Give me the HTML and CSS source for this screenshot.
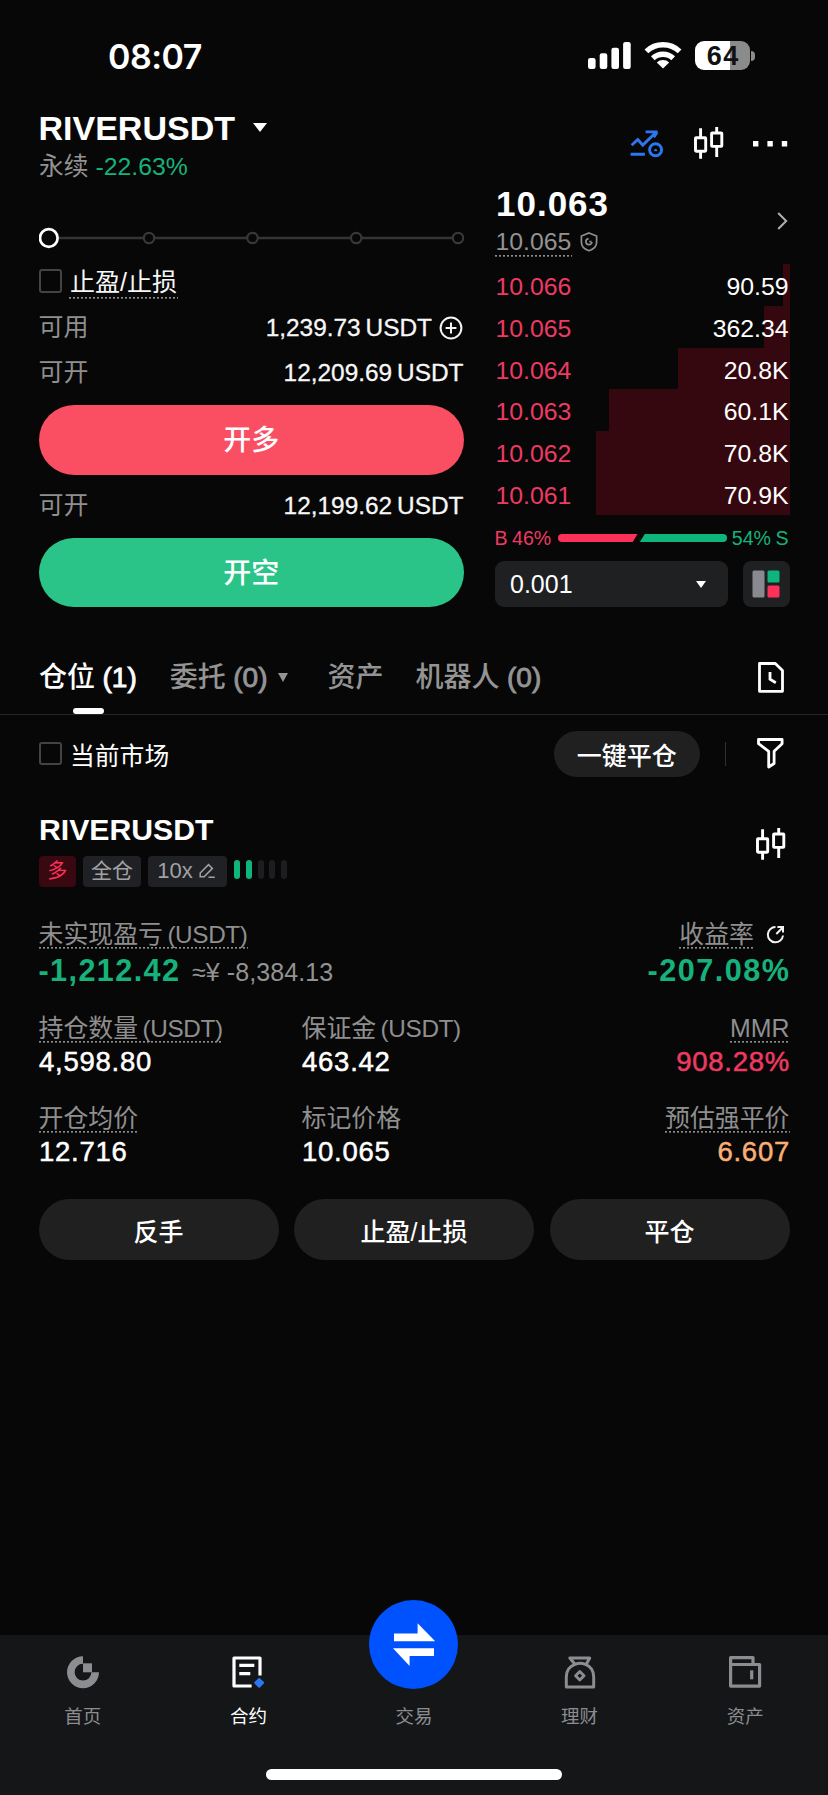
FILE: index.html
```html
<!DOCTYPE html>
<html lang="zh-CN">
<head>
<meta charset="utf-8">
<title>RIVERUSDT</title>
<link rel="stylesheet" href="styles.css">
</head>
<body>
<svg class="defs" width="0" height="0">
  <symbol id="candles" viewBox="0 0 30 32">
    <g fill="none" stroke="currentColor" stroke-width="2.9">
      <rect x="1.5" y="10.8" width="10.2" height="13.4" rx=".6"/>
      <rect x="17.6" y="6" width="10.2" height="13.4" rx=".6"/>
      <path d="M6.6 1.200v9M6.6 25v6.800M22.7 0v5M22.7 20v10"/>
    </g>
  </symbol>
</svg>
<div class="app">
  <header class="status">
    <span class="clock">08:07</span>
    <svg class="signal" width="43" height="27" viewBox="0 0 43 27" fill="#fff">
      <rect x="0" y="16" width="7.6" height="11" rx="2.2"/><rect x="11.7" y="11.3" width="7.6" height="15.7" rx="2.2"/><rect x="23.4" y="5.7" width="7.6" height="21.3" rx="2.2"/><rect x="35.1" y="0" width="7.6" height="27" rx="2.2"/>
    </svg>
    <svg class="wifi" width="38" height="28" viewBox="0 0 38 28">
      <g fill="none" stroke="#fff" stroke-width="5.400">
        <path d="M2.4 10.4a24 24 0 0 1 33.2 0"/>
        <path d="M8.8 17.2a15 15 0 0 1 20.4 0"/>
      </g>
      <path fill="#fff" d="M12.8 21.4a9.2 9.2 0 0 1 12.4 0L19 27.6z"/>
    </svg>
    <span class="battery"><b>64</b></span>
    <i class="nub"></i>
  </header>

  <section class="head">
    <div class="pair">
      <h1>RIVERUSDT<i class="caret"></i></h1>
      <p>永续 <span class="up">-22.63%</span></p>
    </div>
    <svg class="ic-trade" width="34" height="28" viewBox="0 0 34 28" fill="none" stroke="#2b77f0" stroke-width="2.9">
      <path d="M1.6 15.2l6.2-5.7 5 5.6L26 2.2M15.6 1.9h12M.6 24.2h14.3"/>
      <path d="M27 2.2l-3.2 5"/>
      <circle cx="25.6" cy="19.8" r="6"/>
      <path d="M24.200 20.700h2.800L25.6 18.900z" stroke-width="1" fill="#2b77f0"/>
    </svg>
    <svg class="ic-candle" width="30" height="32"><use href="#candles"/></svg>
    <svg class="ic-more" width="35" height="6" fill="#fff"><path d="M0 0h5.4v5.4H0zM14.4 0h5.4v5.4h-5.4zM28.8 0h5.4v5.4h-5.4z"/></svg>
  </section>

  <section class="trade">
    <div class="order">
      <svg class="slider" width="425" height="22" viewBox="0 0 425 22" fill="#070707">
        <path d="M20 11h393" stroke="#343437" stroke-width="2.6"/>
        <g stroke="#38383b" stroke-width="2.2"><circle cx="110" cy="11" r="5.2"/><circle cx="213.500" cy="11" r="5.2"/><circle cx="317.2" cy="11" r="5.2"/><circle cx="419" cy="11" r="5.2"/></g>
        <circle cx="9.800" cy="11" r="8.8" stroke="#fff" stroke-width="2.7"/>
      </svg>
      <div class="line tpsl"><i class="check"></i><span class="dots">止盈/止损</span></div>
      <div class="line avail"><label>可用</label><span>1,239.73 USDT</span>
        <svg width="24" height="24" viewBox="0 0 24 24" fill="none" stroke="#f4f4f4" stroke-width="2"><circle cx="12" cy="12" r="10.4"/><path d="M12 6.6v10.8M6.6 12h10.8"/></svg>
      </div>
      <div class="line open"><label>可开</label><span>12,209.69 USDT</span></div>
      <button class="big long">开多</button>
      <div class="line open2"><label>可开</label><span>12,199.62 USDT</span></div>
      <button class="big short">开空</button>
    </div>

    <div class="book">
      <div class="last">
        <div>
          <strong>10.063</strong>
          <div class="mark"><span class="dots">10.065</span>
            <svg width="18" height="20" viewBox="0 0 18 20" fill="none" stroke="#8f8f8f" stroke-width="1.7"><path d="M9 1l7.6 3v6.3c0 4-3 7-7.6 8.5-4.600-1.500-7.600-4.500-7.600-8.500V4z"/><path d="M8.600 6.700a3 3 0 1 0 3.300 3.300M9.300 9.700h2.200"/></svg>
          </div>
        </div>
        <svg class="chev" width="11" height="18" viewBox="0 0 11 18" fill="none" stroke="#b0b0b0" stroke-width="2"><path d="M1.200 1l8 8-8 8"/></svg>
      </div>
      <ul class="asks">
        <li><i style="width:7px"></i><span>10.066</span><b>90.59</b></li>
        <li><i style="width:25.500px"></i><span>10.065</span><b>362.34</b></li>
        <li><i style="width:112px"></i><span>10.064</span><b>20.8K</b></li>
        <li><i style="width:180.500px"></i><span>10.063</span><b>60.1K</b></li>
        <li><i style="width:193.500px"></i><span>10.062</span><b>70.8K</b></li>
        <li><i style="width:194px"></i><span>10.061</span><b>70.9K</b></li>
      </ul>
      <div class="ratio">
        <span class="down">B 46%</span>
        <svg width="170" height="8" viewBox="0 0 170 8"><path fill="#fb3159" d="M4 0h75.500l-4.800 8H4a4 4 0 0 1 0-8z"/><path fill="#0fb67c" d="M86.800 0H165a4 4 0 0 1 0 8H81.800z"/></svg>
        <span class="up">54% S</span>
      </div>
      <div class="tools">
        <div class="step">0.001<i class="caret"></i></div>
        <div class="view"><svg width="28" height="28" viewBox="0 0 28 28"><rect x=".5" y=".5" width="12" height="27" rx="1.500" fill="#898a8f"/><rect x="15.500" y=".5" width="12" height="12" rx="1.500" fill="#0fb67c"/><rect x="15.500" y="15.500" width="12" height="12" rx="1.500" fill="#fb3159"/></svg></div>
      </div>
    </div>
  </section>

  <nav class="tabs">
    <a class="on">仓位 <b>(1)</b></a>
    <a>委托 <b>(0)</b><i class="caret"></i></a>
    <a>资产</a>
    <a>机器人 <b>(0)</b></a>
    <svg width="26" height="31" viewBox="0 0 26 31" fill="none" stroke="#fff" stroke-width="2.800"><path stroke-linejoin="round" d="M1.500 1.500h15.800l7.200 7v20.800h-23z"/><path d="M12 10v7.300l5.800 3.400"/></svg>
  </nav>

  <section class="filter">
    <i class="check"></i><span>当前市场</span>
    <button>一键平仓</button>
    <i class="sep"></i>
    <svg width="27" height="31" viewBox="0 0 27 31" fill="none" stroke="#fff" stroke-width="2.800" stroke-linejoin="round"><path d="M1.500 1.500h23.600v4.200l-8 7.600v12.200l-5.400 3.500V13.300L1.500 5.700z"/></svg>
  </section>

  <section class="position">
    <div class="pos-head">
      <div>
        <h2>RIVERUSDT</h2>
        <div class="tags">
          <span class="tag side">多</span>
          <span class="tag mode">全仓</span>
          <span class="tag lever">10x
            <svg width="17" height="16" viewBox="0 0 17 16" fill="none" stroke="#a1a2a6" stroke-width="1.500"><path d="M1.200 13.800V10l8.300-8.400 3.900 3.800-8.300 8.400zM9.500 14.300h6.300"/></svg>
          </span>
          <span class="risk"><i class="lit"></i><i class="lit"></i><i></i><i></i><i></i></span>
        </div>
      </div>
      <svg class="ic-chart" width="30" height="32"><use href="#candles"/></svg>
    </div>

    <div class="pnl">
      <div>
        <span class="label dots">未实现盈亏 <em>(USDT)</em></span>
        <p class="up"><b>-1,212.42</b><small>≈¥ -8,384.13</small></p>
      </div>
      <div class="right">
        <div class="roi"><span class="label dots">收益率</span>
          <svg width="19" height="19" viewBox="0 0 19 19" fill="none" stroke="#f2f2f2" stroke-width="2"><path d="M9.500 2.100a7.600 7.600 0 1 0 7.500 8.400"/><path d="M10.300 9l6.500-6.500M11.400 2h5.600v5.600"/></svg>
        </div>
        <p class="up"><b>-207.08%</b></p>
      </div>
    </div>

    <div class="facts">
      <div><span class="label dots">持仓数量 <em>(USDT)</em></span><p>4,598.80</p></div>
      <div><span class="label">保证金 <em>(USDT)</em></span><p>463.42</p></div>
      <div class="right"><span class="label dots">MMR</span><p class="down">908.28%</p></div>
      <div><span class="label dots">开仓均价</span><p>12.716</p></div>
      <div><span class="label">标记价格</span><p>10.065</p></div>
      <div class="right"><span class="label dots">预估强平价</span><p class="liq">6.607</p></div>
    </div>

    <div class="actions"><button>反手</button><button>止盈/止损</button><button>平仓</button></div>
  </section>

  <footer class="dock">
    <div class="items">
      <a><svg width="34" height="34" viewBox="0 0 34 34"><path d="M17 5A12.200 12.200 0 1 0 29.200 17.200" fill="none" stroke="#8b8d91" stroke-width="7.600"/><path fill="#8b8d91" d="M17 8.300h9v9h-9z"/></svg>首页</a>
      <a class="on"><svg width="34" height="34" viewBox="0 0 34 34" fill="none" stroke="#fff" stroke-width="3.200"><path stroke-linejoin="round" d="M29 20.500V3H3v28h17.600"/><path d="M8.300 10.300h15M8.300 18.600h11"/><rect x="24.400" y="24" width="7.600" height="7.600" rx="1" transform="rotate(45 28.200 27.800)" fill="#2b77f0" stroke="none"/></svg>合约</a>
      <a class="swap"><span class="disc"><svg width="44" height="44" viewBox="0 0 44 44" fill="#fff"><path d="M2 11.500h23.600V1.300L43.200 19.200H2zM42 26.300H1L17.600 44V34H42z"/></svg></span>交易</a>
      <a><svg width="34" height="34" viewBox="0 0 34 34" fill="none" stroke="#8b8d91" stroke-width="3" stroke-linejoin="round"><path d="M12 9.300L6.800 3h19.900l-3.400 6.300M12 9.300C6.300 11.300 3.300 16 3.300 22v10h27.400V22c0-6-3-10.700-8.300-12.700-3-1.100-7.400-1.100-10.400 0z"/><rect x="13.800" y="17.800" width="6" height="6" transform="rotate(45 16.800 20.800)" stroke-width="2.800"/></svg>理财</a>
      <a><svg width="34" height="34" viewBox="0 0 34 34" fill="none" stroke="#8b8d91" stroke-width="3.200" stroke-linejoin="round"><path d="M2.600 9.500h29v21.600h-29V2.600H25v6.900"/><path d="M23.700 15.300v9"/></svg>资产</a>
    </div>
    <i class="homebar"></i>
  </footer>
</div>
</body>
</html>
```

FILE: styles.css
```css
* { box-sizing: border-box; margin: 0; padding: 0; }
body {
  background: #070707;
  color: #fff;
  font-family: "Liberation Sans", "Noto Sans CJK SC", sans-serif;
  font-size: 25px;
}
button { border: 0; color: #fff; font-family: inherit; }
svg { display: block; flex: none; }
i { display: block; flex: none; font-style: normal; }
.defs { position: absolute; }
.app { width: 828px; height: 1795px; display: flex; flex-direction: column; overflow: hidden; }
.up { color: #17b27c; }
.down { color: #ee3a63; }
.caret { border: 7px solid transparent; border-top: 9px solid currentColor; border-bottom: 0; }

/* status bar */
.status { height: 92px; padding: 41px 0 0 108px; display: flex; align-items: flex-start; }
.clock { width: 479.500px; font: 600 34px/32px Inter, sans-serif; letter-spacing: -0.500px; }
.signal { margin-top: 1px; }
.wifi { margin: 0 13px 0 13.500px; }
.battery {
  width: 55px; height: 29px; border-radius: 9px;
  background: linear-gradient(90deg, #fff 63%, #8b8b8b 63%);
  color: #111; text-align: center;
}
.battery b { font: 700 27px/30px "Liberation Sans"; letter-spacing: 1.500px; margin-right: -1.500px; }
.nub { width: 4px; height: 10px; margin: 10px 0 0 1px; border-radius: 0 5px 5px 0; background: #8b8b8b; }

/* pair header */
.head { height: 92px; padding: 0 40px 0 38px; display: flex; align-items: flex-start; }
.pair { flex: 1; }
.pair h1 { display: flex; align-items: center; height: 44px; margin-top: 14px; padding-left: 0.500px; font-size: 34px; line-height: 44px; }
.pair h1 .caret { margin-left: 18px; margin-top: -1px; }
.pair p { margin: 1px 0 0 1px; color: #929292; line-height: 31px; font-size: 24.800px; }
.ic-trade { margin: 37.500px 30px 0 0; }
.ic-candle { margin: 35px 29px 0 0; }
.ic-more { margin-top: 48.500px; }

/* order form and book */
.trade { display: flex; gap: 30.500px; padding: 0 38.500px; }
.order { width: 425.500px; flex: none; }
.slider { margin-top: 43px; }
.line { display: flex; align-items: center; height: 36px; line-height: 37.500px; font-size: 24.400px; color: #f7f7f7; }
.line label { flex: 1; color: #8f8f8f; font-size: 25px; }
.line span { -webkit-text-stroke: 0.300px currentColor; word-spacing: -1.800px; margin-right: 0.500px; }
.line.avail span { margin-right: 7px; }
.avail svg { margin-right: 1px; }
.check { width: 23.500px; height: 23.500px; border: 2px solid #434347; border-radius: 3px; }
.dots {
  display: inline-block;
  background: repeating-linear-gradient(90deg, #8a8a8a 0 2px, transparent 2px 4px) left bottom / 100% 1.700px no-repeat;
}
.tpsl { margin-top: 14px; align-items: flex-start; }
.tpsl .check { margin-top: 6px; }
.line.tpsl .dots { height: 35.500px; margin-left: 7px; padding: 0 1px; line-height: 39px; font-size: 25px; -webkit-text-stroke: 0; }
.avail { margin-top: 11px; }
.open { margin-top: 9px; }
.open2 { margin: 13px 0 14px; }
.big { display: block; width: 100%; height: 69.500px; border-radius: 35px; font-size: 28px; font-weight: 500; line-height: 71px; }
.long { margin-top: 14px; background: #fa4e62; }
.short { background: #2ac489; }

.book { flex: 1; }
.last { display: flex; justify-content: space-between; height: 80px; }
.last strong { display: block; height: 41px; margin-left: 1.500px; font-size: 35px; line-height: 40px; letter-spacing: 1px; }
.mark { display: flex; color: #929292; }
.mark .dots { height: 32px; padding: 0 1px; line-height: 34px; font-size: 24.800px; }
.mark svg { margin: 7px 0 0 7.500px; }
.chev { margin: 28px 2px 0 0; }
.asks { list-style: none; }
.asks li { display: flex; position: relative; justify-content: space-between; height: 41.800px; padding: 0 1px; line-height: 45px; font-size: 24.800px; }
.asks i { position: absolute; right: 0; top: 0; bottom: 0; background: #35080f; }
.asks span { position: relative; color: #ee3a63; }
.asks b { position: relative; font-weight: 400; }
.ratio { display: flex; align-items: center; justify-content: space-between; height: 24px; line-height: 26px; margin-top: 11px; padding: 0 1px 0 0; font-size: 19.600px; white-space: nowrap; }
.ratio span { word-spacing: -1px; }
.ratio svg { margin-left: 3px; }
.tools { display: flex; justify-content: space-between; margin-top: 11px; }
.step { display: flex; align-items: center; justify-content: space-between; width: 233px; height: 46px; padding: 1px 21.500px 0 15.500px; border-radius: 9px; background: #1f2022; }
.step .caret { border-width: 7px 5.500px 0; }
.view { display: flex; align-items: center; justify-content: center; width: 46.500px; height: 46px; border-radius: 8px; background: #1f2022; }

/* tabs */
.tabs { display: flex; align-items: center; height: 73px; margin-top: 34.500px; padding: 0 44.500px 0 39px; border-bottom: 1px solid #262626; line-height: 73px; font-size: 28px; font-weight: 500; color: #949494; white-space: nowrap; }
.tabs a { display: flex; align-items: center; position: relative; margin-right: 33px; }
.tabs b { margin-left: 7.500px; font-weight: 500; -webkit-text-stroke: 0.900px currentColor; }
.tabs a:nth-child(2) { margin-right: 40px; }
.tabs a:nth-child(3) { margin-right: 32px; }
.tabs a .caret { margin-left: 10px; border-width: 9px 5.800px 0; }
.tabs .on { color: #fff; }
.tabs .on::after { content: ""; position: absolute; left: 34px; bottom: 0; width: 31px; height: 6px; border-radius: 3px; background: #fff; }
.tabs svg { margin-left: auto; }

.filter { display: flex; align-items: center; height: 46px; margin-top: 16px; padding: 0 44px 0 38.500px; }
.filter span { flex: 1; margin-left: 8px; font-size: 24.800px; }
.filter button { width: 146.500px; height: 46px; border-radius: 23px; background: #202020; font-size: 25px; font-weight: 500; }
.sep { width: 1px; height: 24px; margin: 0 31px 0 25px; background: #303030; }

/* position */
.position { padding: 32px 38.500px 0; }
.pos-head { display: flex; justify-content: space-between; }
.pos-head h2 { padding: 0 0 0 0.500px; font-size: 30.200px; line-height: 41px; height: 40px; }
.ic-chart { margin: 19px 4px 0 0; }
.tags { display: flex; gap: 7px; height: 31px; margin-top: 7px; line-height: 32px; font-size: 21px; color: #a1a2a6; }
.tag { display: flex; align-items: center; justify-content: center; border-radius: 4px; background: #1f2124; }
.side { width: 37.500px; background: #3a0811; color: #fb3159; font-size: 20px; }
.mode { width: 58px; }
.lever { width: 79px; gap: 6px; font-size: 22px; padding-right: 2px; }
.risk { display: flex; gap: 5.800px; margin-top: 4px; }
.risk i { width: 6px; height: 19.500px; border-radius: 3px; background: #1d1d1f; }
.risk .lit { background: #0fb67c; }
.label { height: 31px; line-height: 32px; color: #8f8f8f; white-space: nowrap; display: inline-block; vertical-align: top; font-size: 24.900px; }
.label em { font-style: normal; font-size: 24.300px; letter-spacing: -0.350px; margin-left: -2.500px; }
.right { text-align: right; }
.pnl { display: flex; justify-content: space-between; margin-top: 31px; }
.pnl p { height: 36px; margin-top: 2px; line-height: 38px; }
.pnl b { font-size: 30.600px; letter-spacing: 1.400px; }
.pnl .right b { letter-spacing: 1.500px; margin-right: -1px; }
.pnl small { margin-left: 11.500px; font-size: 25px; letter-spacing: 0.100px; color: #929292; }
.roi { display: flex; justify-content: flex-end; }
.roi svg { margin: 7px 4.500px 0 12px; }
.facts { display: grid; grid-template-columns: 263px 263px 1fr; row-gap: 24px; margin-top: 25.500px; }
.facts p { height: 34px; margin-top: 1px; line-height: 36px; padding-left: 0.500px; font-size: 27.500px; letter-spacing: 0.750px; -webkit-text-stroke: 0.500px currentColor; }
.facts .right p { margin-right: -0.500px; }
.liq { color: #f9af73; }
.actions { display: grid; grid-template-columns: repeat(3, 1fr); gap: 15.500px; margin-top: 31px; }
.actions button { height: 61px; padding-top: 1px; border-radius: 31px; background: #202020; font-size: 25px; font-weight: 500; }

/* bottom navigation */
.dock { height: 160.500px; margin-top: auto; background: #141618; flex: none; }
.items { display: grid; grid-template-columns: repeat(5, 1fr); height: 134.500px; }
.items a { display: flex; flex-direction: column; align-items: center; padding-top: 20px; gap: 13px; font-size: 18.500px; line-height: 29px; color: #8b8d91; }
.items .on { color: #fff; }
.items .swap { padding-top: 0; }
.disc { display: flex; align-items: center; justify-content: center; width: 89px; height: 89px; margin: -35px 0 0; border-radius: 50%; background: #0052ff; }
.homebar { width: 296px; height: 11px; margin: 0 auto; border-radius: 6px; background: #fff; }
```
